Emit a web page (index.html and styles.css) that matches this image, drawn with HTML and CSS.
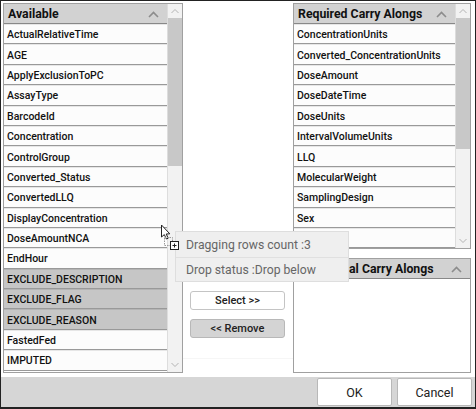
FILE: index.html
```html
<!DOCTYPE html>
<html lang="en">
<head>
    <meta charset="UTF-8">
    <title>Carry Alongs</title>
    <link rel="stylesheet" href="styles.css">
</head>
<body>
<div class="window">
    <div class="content">
        <div class="panel panel-left">
            <div class="grid">
                <div class="grid-head"><span>Available</span><svg class="sort" width="11" height="7" viewBox="0 0 11 7"><path d="M1 6 L5.5 1.5 L10 6" fill="none" stroke="#8c8c8c" stroke-width="1.6"/></svg></div>
                <div class="row">ActualRelativeTime</div>
                <div class="row">AGE</div>
                <div class="row">ApplyExclusionToPC</div>
                <div class="row">AssayType</div>
                <div class="row">BarcodeId</div>
                <div class="row">Concentration</div>
                <div class="row">ControlGroup</div>
                <div class="row">Converted_Status</div>
                <div class="row">ConvertedLLQ</div>
                <div class="row">DisplayConcentration</div>
                <div class="row">DoseAmountNCA</div>
                <div class="row">EndHour</div>
                <div class="row selected">EXCLUDE_DESCRIPTION</div>
                <div class="row selected">EXCLUDE_FLAG</div>
                <div class="row selected">EXCLUDE_REASON</div>
                <div class="row">FastedFed</div>
                <div class="row">IMPUTED</div>
            </div>
            <div class="scrollbar">
                <svg class="arrow" width="14" height="14" viewBox="0 0 14 14"><path d="M3.5 9 L7 5.5 L10.5 9" fill="none" stroke="#b4b4b4" stroke-width="1"/></svg>
                <div class="track"><div class="thumb thumb-left"></div></div>
                <svg class="arrow" width="14" height="14" viewBox="0 0 14 14"><path d="M3.5 5 L7 8.5 L10.5 5" fill="none" stroke="#b4b4b4" stroke-width="1"/></svg>
            </div>
        </div>

        <div class="actions">
            <div class="action-btns">
                <button class="btn">Select &gt;&gt;</button>
                <button class="btn btn-gray">&lt;&lt; Remove</button>
            </div>
        </div>

        <div class="right-col">
            <div class="panel panel-required">
                <div class="grid">
                    <div class="grid-head"><span>Required Carry Alongs</span><svg class="sort" width="11" height="7" viewBox="0 0 11 7"><path d="M1 6 L5.5 1.5 L10 6" fill="none" stroke="#8c8c8c" stroke-width="1.6"/></svg></div>
                    <div class="row">ConcentrationUnits</div>
                    <div class="row">Converted_ConcentrationUnits</div>
                    <div class="row">DoseAmount</div>
                    <div class="row">DoseDateTime</div>
                    <div class="row">DoseUnits</div>
                    <div class="row">IntervalVolumeUnits</div>
                    <div class="row">LLQ</div>
                    <div class="row">MolecularWeight</div>
                    <div class="row">SamplingDesign</div>
                    <div class="row">Sex</div>
                    <div class="row"></div>
                </div>
                <div class="scrollbar">
                    <svg class="arrow" width="14" height="14" viewBox="0 0 14 14"><path d="M3.5 9 L7 5.5 L10.5 9" fill="none" stroke="#b4b4b4" stroke-width="1"/></svg>
                    <div class="track"><div class="thumb thumb-right"></div></div>
                    <svg class="arrow" width="14" height="14" viewBox="0 0 14 14"><path d="M3.5 5 L7 8.5 L10.5 5" fill="none" stroke="#b4b4b4" stroke-width="1"/></svg>
                </div>
            </div>
            <div class="panel panel-optional">
                <div class="grid">
                    <div class="grid-head head-optional"><span>al Carry Alongs</span><svg class="sort" width="11" height="7" viewBox="0 0 11 7"><path d="M1 6 L5.5 1.5 L10 6" fill="none" stroke="#8c8c8c" stroke-width="1.6"/></svg></div>
                </div>
            </div>
        </div>
    </div>

    <div class="footer">
        <button class="btn-footer">OK</button>
        <button class="btn-footer">Cancel</button>
    </div>

    <!-- drag tooltip and cursor sit over the grids -->
    <div class="drag-tip">
        <div class="drag-line">Dragging rows count :3</div>
        <div class="drag-line">Drop status :Drop below</div>
    </div>
    <svg class="cursor" width="22" height="30" viewBox="0 0 22 30">
        <path d="M1.5 1 L1.5 13 L4.3 10.6 L6.4 15 L8.2 14.2 L6.2 10 L9.8 9.8 Z" fill="#fff" stroke="#222" stroke-width="1"/>
        <rect x="4.5" y="13.5" width="8" height="8" fill="none" stroke="#999" stroke-dasharray="1.5 1"/>
        <rect x="10.5" y="17.5" width="8" height="8" fill="#fff" stroke="#222"/>
        <path d="M12.5 21.5 H16.5 M14.5 19.5 V23.5" stroke="#222" stroke-width="1"/>
    </svg>
</div>
</body>
</html>
```

FILE: styles.css
```css
* {
    box-sizing: border-box;
}

body {
    margin: 0;
    font-family: "Roboto", sans-serif;
    font-size: 10.5px;
    font-weight: 500;
    color: #111;
}

.window {
    position: relative;
    width: 476px;
    height: 409px;
    display: flex;
    flex-direction: column;
    background: #fff;
    border: 1px solid #222;
    border-bottom-width: 2px;
    overflow: hidden;
}

.content {
    height: 376px;
    padding: 2px 4px 4px 2px;
    display: flex;
}

.panel {
    display: flex;
    border: 1px solid #a0a0a0;
    overflow: hidden;
}

.panel-left {
    width: 180px;
    height: 370px;
}

.grid {
    flex: 1;
    min-width: 0;
}

.grid-head {
    height: 20px;
    padding: 1px 8px 0 4px;
    display: flex;
    align-items: center;
    justify-content: space-between;
    background: #d2d2d2;
    border-bottom: 1px solid #888;
    font-size: 12.3px;
    font-weight: 700;
}

.row {
    height: 20.4px;
    padding: 1px 0 0 3px;
    display: flex;
    align-items: center;
    background: #fcfcfc;
    border-top: 1px solid #e6e6e6;
    border-bottom: 1px solid #999;
    white-space: nowrap;
}

.selected {
    background: #c6c6c6;
    border-top-color: #b4b4b4;
}

.scrollbar {
    width: 15px;
    display: flex;
    flex-direction: column;
    background: #f2f2f2;
    border-left: 1px solid #ddd;
}

.track {
    flex: 1;
}

.thumb {
    background: #c8c8c8;
}

.thumb-left {
    height: 148px;
}

.thumb-right {
    height: 131px;
}

.actions {
    width: 110px;
    height: 356px;
    padding: 288px 8px 0 7px;
    border-bottom: 1px solid #f6f6f6;
}

.action-btns {
    display: flex;
    flex-direction: column;
    gap: 9px;
}

.btn {
    height: 19px;
    padding: 0;
    background: #fff;
    border: 1px solid #c4c4c4;
    border-radius: 3px;
    font-family: inherit;
    font-size: 11px;
    font-weight: 500;
    color: #222;
}

.btn-gray {
    background: #d4d4d4;
    border-color: #b8b8b8;
}

.right-col {
    width: 178px;
    display: flex;
    flex-direction: column;
    gap: 9px;
}

.panel-required {
    height: 246px;
}

.panel-optional {
    height: 115px;
}

.head-optional {
    padding-left: 55px;
}

.footer {
    flex: 1;
    padding: 1px 3px 0 0;
    display: flex;
    justify-content: flex-end;
    gap: 5px;
    background: #d6d6d6;
}

.btn-footer {
    width: 75px;
    height: 28px;
    background: #fff;
    border: 1px solid #b8b8b8;
    border-radius: 2px;
    font-family: inherit;
    font-size: 12.5px;
    font-weight: 400;
    color: #222;
}

.drag-tip {
    position: absolute;
    left: 174px;
    top: 230px;
    width: 174px;
    height: 51px;
    background: #efefef;
    border: 1px solid #dedede;
    color: #666;
    font-size: 12.2px;
    font-weight: 400;
}

.drag-line {
    height: 25px;
    padding-left: 10px;
    display: flex;
    align-items: center;
}

.drag-line + .drag-line {
    border-top: 1px solid #e0e0e0;
}

.cursor {
    position: absolute;
    left: 159px;
    top: 223px;
}

.sort,
.arrow {
    flex-shrink: 0;
}
```
